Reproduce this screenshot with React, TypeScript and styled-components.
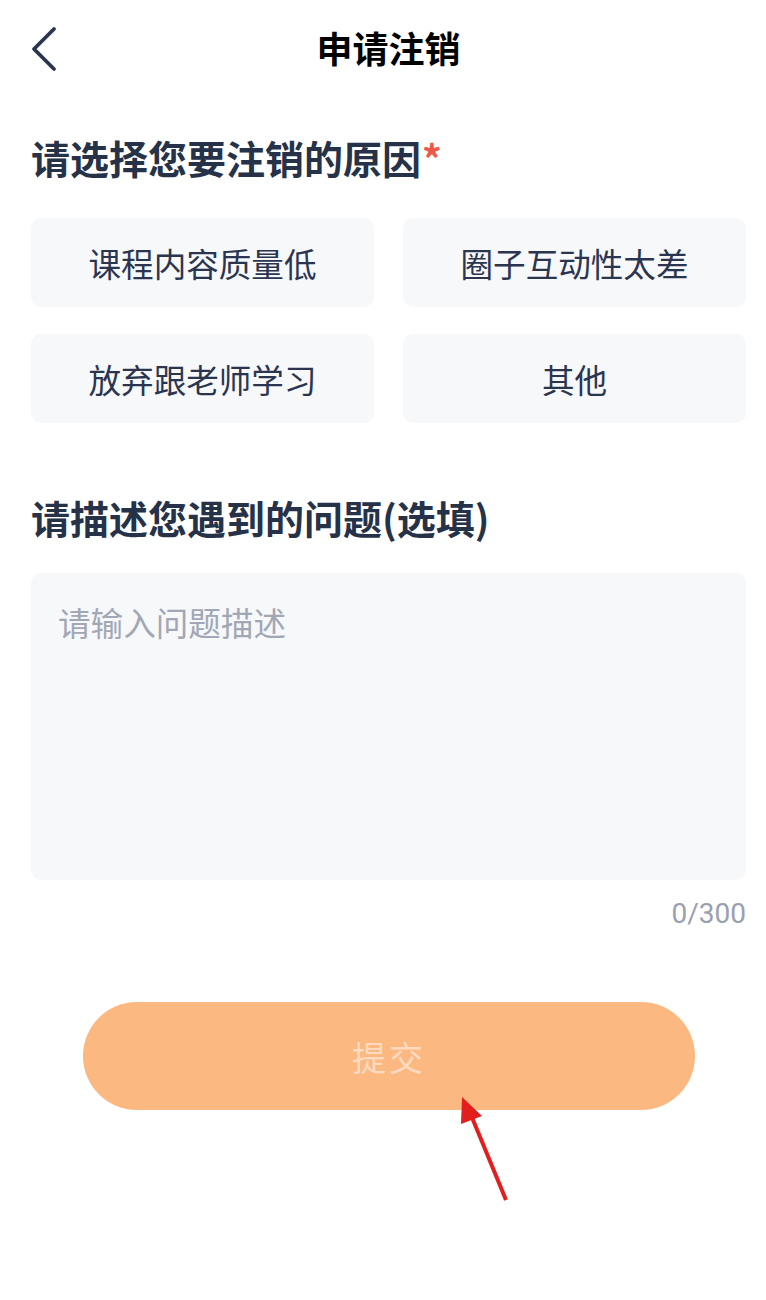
import React from "react";
import styled, { createGlobalStyle } from "styled-components";

const Global = createGlobalStyle`
  html, body { margin: 0; padding: 0; background: #ffffff; }
  body { font-family: "Noto Sans CJK SC", "Noto Sans", sans-serif; }
  * { box-sizing: border-box; }
`;

const Page = styled.div`
  position: relative;
  width: 766px;
  min-height: 1300px;
  background: #ffffff;
  padding: 0 20px 0 31px;
`;

const Header = styled.header`
  position: relative;
  height: 96px;
  display: flex;
  align-items: center;
  justify-content: center;
`;

const BackButton = styled.button`
  position: absolute;
  left: -6px;
  top: 23px;
  width: 40px;
  height: 52px;
  border: 0;
  padding: 0;
  background: transparent;
  display: flex;
  align-items: center;
  justify-content: center;
`;

const Title = styled.h1`
  margin: 0 0 2px 0;
  font-size: 36px;
  font-weight: 700;
  line-height: 1;
  color: #000000;
`;

const SectionTitle = styled.h2<{ $top: number }>`
  margin: ${(p) => p.$top}px 0 0 0;
  font-size: 39px;
  font-weight: 700;
  line-height: 1;
  color: #263248;
  display: flex;
  align-items: flex-start;
`;

const Star = styled.span`
  color: #ea5a4a;
  font-size: 39px;
  margin-left: 1px;
`;

const Options = styled.div`
  margin-top: 41px;
  display: grid;
  grid-template-columns: 343px 343px;
  column-gap: 29px;
  row-gap: 27px;
`;

const Option = styled.div`
  height: 89px;
  border-radius: 10px;
  background: #f6f8fa;
  display: flex;
  align-items: center;
  justify-content: center;
  font-size: 32.6px;
  color: #2b3550;
`;

const TextArea = styled.div`
  margin-top: 36px;
  height: 307px;
  border-radius: 10px;
  background: #f6f8fa;
  padding: 29px 27px;
`;

const Placeholder = styled.div`
  font-size: 32.6px;
  line-height: 1.2;
  color: #a1a7b5;
`;

const Counter = styled.div`
  margin-top: 20px;
  text-align: right;
  font-family: Roboto, "Noto Sans", sans-serif;
  font-size: 28px;
  line-height: 1;
  color: #9aa0af;
`;

const SubmitWrap = styled.div`
  margin-top: 74px;
  padding-left: 52px;
  padding-right: 51px;
`;

const Submit = styled.button`
  width: 100%;
  height: 108px;
  border: 0;
  border-radius: 54px;
  background: #fcb881;
  color: rgba(255, 255, 255, 0.5);
  font-family: "Noto Sans CJK SC", sans-serif;
  font-size: 34px;
  display: flex;
  align-items: center;
  justify-content: center;
  letter-spacing: 3px;
`;

const Arrow = styled.svg`
  position: absolute;
  left: 0;
  top: 0;
  pointer-events: none;
`;

export default function App() {
  const reasons = ["课程内容质量低", "圈子互动性太差", "放弃跟老师学习", "其他"];
  return (
    <Page>
      <Global />
      <Header>
        <BackButton aria-label="返回">
          <svg width="30" height="46" viewBox="0 0 30 46">
            <path
              d="M24 3 L4 23 L24 43"
              fill="none"
              stroke="#2b3550"
              strokeWidth="3.8"
              strokeLinecap="round"
              strokeLinejoin="round"
            />
          </svg>
        </BackButton>
        <Title>申请注销</Title>
      </Header>
      <SectionTitle $top={42}>
        请选择您要注销的原因<Star>*</Star>
      </SectionTitle>
      <Options>
        {reasons.map((r) => (
          <Option key={r}>{r}</Option>
        ))}
      </Options>
      <SectionTitle $top={75}>请描述您遇到的问题(选填)</SectionTitle>
      <TextArea>
        <Placeholder>请输入问题描述</Placeholder>
      </TextArea>
      <Counter>0/300</Counter>
      <SubmitWrap>
        <Submit>提交</Submit>
      </SubmitWrap>
      <Arrow width="766" height="1300" viewBox="0 0 766 1300">
        <line x1="506" y1="1200" x2="471" y2="1115" stroke="#e31e1e" strokeWidth="4" />
        <polygon points="462,1097 482,1116 461,1124" fill="#e31e1e" />
      </Arrow>
    </Page>
  );
}
